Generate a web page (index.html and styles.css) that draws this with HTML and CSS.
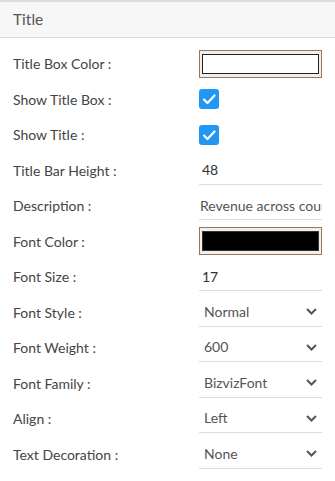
FILE: index.html
```html
<!DOCTYPE html>
<html lang="en">
<head>
    <meta charset="UTF-8">
    <meta name="viewport" content="width=device-width, initial-scale=1.0">
    <title>Title Properties</title>
    <link rel="stylesheet" href="styles.css">
</head>
<body>
    <div class="panel-head">Title</div>

    <div class="props">
        <div class="row">
            <span class="label">Title Box Color :</span>
            <div class="color-box"><span class="swatch white"></span></div>
        </div>
        <div class="row">
            <span class="label">Show Title Box :</span>
            <span class="check">
                <svg width="14" height="14" viewBox="0 0 14 14"><path d="M2 7.5 L5.5 11 L12.5 3.5" fill="none" stroke="#fff" stroke-width="2.2" stroke-linecap="round" stroke-linejoin="round"/></svg>
            </span>
        </div>
        <div class="row">
            <span class="label">Show Title :</span>
            <span class="check">
                <svg width="14" height="14" viewBox="0 0 14 14"><path d="M2 7.5 L5.5 11 L12.5 3.5" fill="none" stroke="#fff" stroke-width="2.2" stroke-linecap="round" stroke-linejoin="round"/></svg>
            </span>
        </div>
        <div class="row">
            <span class="label">Title Bar Height :</span>
            <input class="field" type="text" value="48" readonly>
        </div>
        <div class="row">
            <span class="label">Description :</span>
            <input class="field desc" type="text" value="Revenue across countries" readonly>
        </div>
        <div class="row">
            <span class="label">Font Color :</span>
            <div class="color-box"><span class="swatch black"></span></div>
        </div>
        <div class="row">
            <span class="label">Font Size :</span>
            <input class="field" type="text" value="17" readonly>
        </div>
        <div class="row">
            <span class="label">Font Style :</span>
            <div class="field select">Normal <svg class="chev" width="11" height="7" viewBox="0 0 11 7"><path d="M1 1 L5.5 5.5 L10 1" fill="none" stroke="#555" stroke-width="2"/></svg></div>
        </div>
        <div class="row">
            <span class="label">Font Weight :</span>
            <div class="field select">600 <svg class="chev" width="11" height="7" viewBox="0 0 11 7"><path d="M1 1 L5.5 5.5 L10 1" fill="none" stroke="#555" stroke-width="2"/></svg></div>
        </div>
        <div class="row">
            <span class="label">Font Family :</span>
            <div class="field select">BizvizFont <svg class="chev" width="11" height="7" viewBox="0 0 11 7"><path d="M1 1 L5.5 5.5 L10 1" fill="none" stroke="#555" stroke-width="2"/></svg></div>
        </div>
        <div class="row">
            <span class="label">Align :</span>
            <div class="field select">Left <svg class="chev" width="11" height="7" viewBox="0 0 11 7"><path d="M1 1 L5.5 5.5 L10 1" fill="none" stroke="#555" stroke-width="2"/></svg></div>
        </div>
        <div class="row">
            <span class="label">Text Decoration :</span>
            <div class="field select">None <svg class="chev" width="11" height="7" viewBox="0 0 11 7"><path d="M1 1 L5.5 5.5 L10 1" fill="none" stroke="#555" stroke-width="2"/></svg></div>
        </div>
    </div>
</body>
</html>
```

FILE: styles.css
```css
* {
    margin: 0;
    padding: 0;
    box-sizing: border-box;
}

body {
    background: #fff;
    font-family: Lato, "Open Sans", sans-serif;
    color: #444;
}

.panel-head {
    height: 38px;
    border-top: 2px solid #dcdcdc;
    border-bottom: 1px solid #dcdcdc;
    background: #f7f7f7;
    padding-left: 13px;
    font-size: 15.5px;
    line-height: 34px;
    color: #555;
}

.props {
    padding: 8px 13px 0 13px;
}

.row {
    height: 35.5px;
    display: flex;
    align-items: center;
}

.label {
    width: 186px;
    font-size: 14px;
}

.color-box {
    width: 123px;
    height: 28px;
    border: 1px solid #98765a;
    background: #efefef;
    padding: 3px 2px;
}

.swatch {
    display: block;
    height: 100%;
    border: 1px solid #222;
}

.swatch.white {
    background: #fff;
}

.swatch.black {
    background: #000;
    border-color: #333;
}

.check {
    width: 20px;
    height: 20px;
    border-radius: 3px;
    background: #2196f3;
    display: flex;
    align-items: center;
    justify-content: center;
}

.field {
    width: 123px;
    height: 29px;
    border: none;
    border-bottom: 1px solid #ddd;
    outline: none;
    background: transparent;
    font-family: Lato, "Open Sans", sans-serif;
    font-size: 14px;
    line-height: 28px;
    padding-left: 3px;
    white-space: nowrap;
    overflow: hidden;
    color: #333;
}

.field.desc {
    padding-left: 1px;
    color: #555;
}

.field.select {
    display: flex;
    align-items: center;
    justify-content: space-between;
    padding-left: 5px;
    padding-right: 5px;
    color: #555;
}
```
